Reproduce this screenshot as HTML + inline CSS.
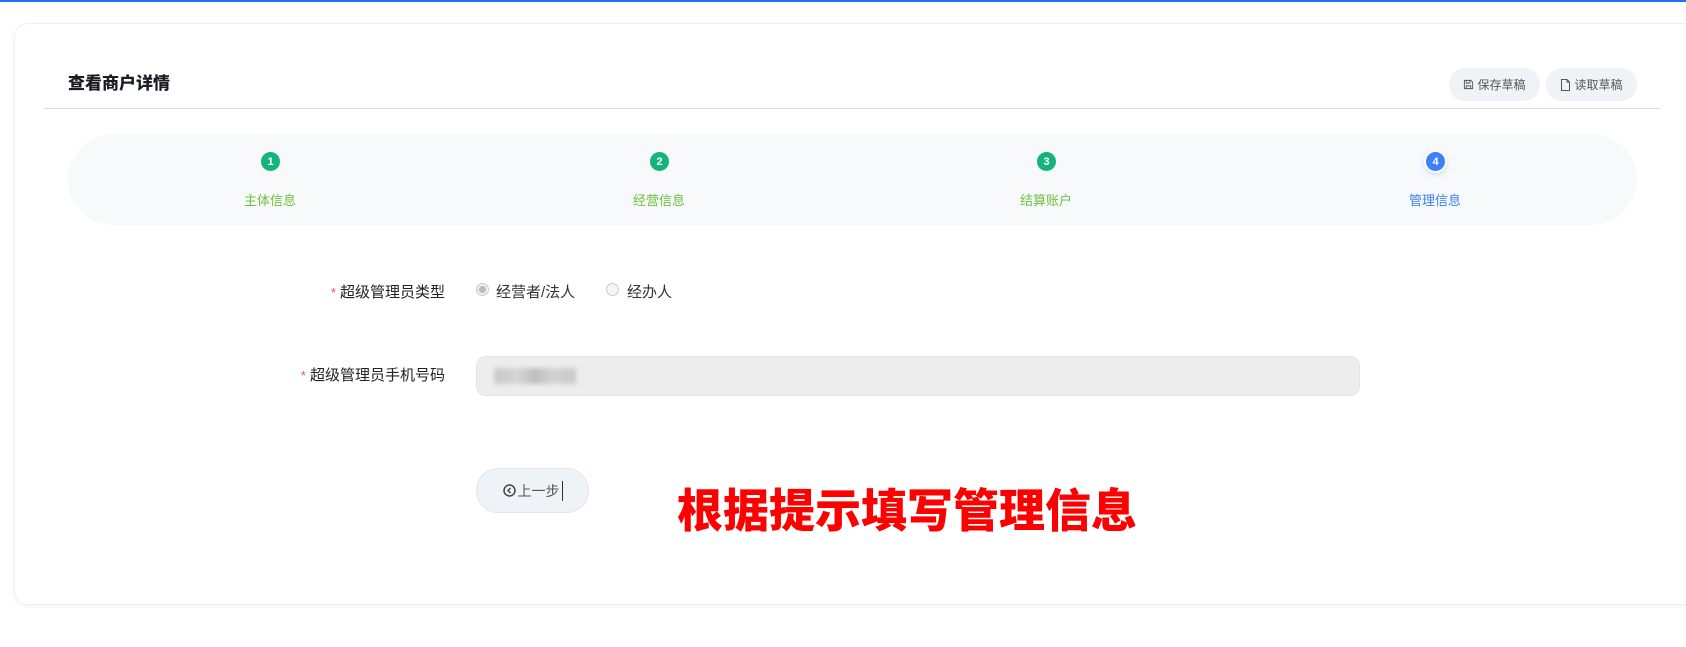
<!DOCTYPE html>
<html><head><meta charset="utf-8"><style>
*{margin:0;padding:0;box-sizing:border-box}
body{width:1686px;height:647px;background:#fff;position:relative;overflow:hidden;font-family:"Liberation Sans","Noto Sans CJK SC",sans-serif;color:#333}
.topline{position:absolute;left:0;top:0;width:1686px;height:2px;background:#1a73f0}
.card{position:absolute;left:14px;top:23px;width:1700px;height:582px;border:1px solid #eef0f4;border-radius:14px;background:#fff;box-shadow:0 2px 6px rgba(0,0,0,.04)}
.abs{position:absolute}
.title{left:68px;top:69px;font-size:17px;font-weight:900;color:#1a1d24;font-family:"Noto Sans CJK SC",sans-serif}
.div{left:44px;top:108px;width:1617px;height:1px;background:#dcdfe4}
.btn{top:68px;height:33px;border-radius:16px;background:#eff2f7;font-size:12px;color:#555;display:flex;align-items:center;justify-content:center;gap:3px}
.steps{left:68px;top:134px;width:1569px;height:91px;border-radius:46px;background:#f7f9fb}
.dot{width:19px;height:19px;border-radius:50%;background:#14b47a;color:#fff;font-size:11px;font-weight:bold;display:flex;align-items:center;justify-content:center;top:152px}
.lab{top:190px;font-size:13px;color:#6ec23e;width:120px;text-align:center}
.fl{font-size:15px;color:#222;text-align:right;width:300px}
.fl b{color:#f04f4f;font-weight:normal;font-size:13px;margin-right:4px}
.radio{width:13px;height:13px;border-radius:50%;border:1px solid #ccc;background:#f5f5f5}
</style></head><body>
<div class="topline"></div>
<div class="card"></div>
<div class="abs title">查看商户详情</div>
<div class="abs div"></div>
<div class="abs btn" style="left:1449px;width:91px"><svg width="11" height="11" viewBox="0 0 12 12"><path d="M1.5 1.5h7l2 2v7h-9z M3.5 1.5v3h4v-3 M3.5 10.5v-3h5v3" fill="none" stroke="#555" stroke-width="1"/></svg>保存草稿</div>
<div class="abs btn" style="left:1546px;width:91px"><svg width="11" height="12" viewBox="0 0 11 12"><path d="M1.5 .5h5.5l2.5 2.5v8.5h-8z M7 .5v2.5h2.5" fill="none" stroke="#555" stroke-width="1"/></svg>读取草稿</div>
<div class="abs steps"></div>
<div class="abs dot" style="left:261px">1</div>
<div class="abs dot" style="left:650px">2</div>
<div class="abs dot" style="left:1037px">3</div>
<div class="abs dot" style="left:1426px;background:#3b82f6;box-shadow:0 0 0 2px #fff,0 2px 6px rgba(59,130,246,.5)">4</div>
<div class="abs lab" style="left:210px">主体信息</div>
<div class="abs lab" style="left:599px">经营信息</div>
<div class="abs lab" style="left:986px">结算账户</div>
<div class="abs lab" style="left:1375px;color:#3b82f6">管理信息</div>
<div class="abs fl" style="left:145px;top:281px"><b>*</b>超级管理员类型</div>
<div class="abs radio" style="left:476px;top:283px;background:#eee"><div style="width:7px;height:7px;border-radius:50%;background:#bbb;margin:2px"></div></div>
<div class="abs" style="left:496px;top:281px;font-size:15px;color:#333">经营者/法人</div>
<div class="abs radio" style="left:606px;top:283px"></div>
<div class="abs" style="left:627px;top:281px;font-size:15px;color:#333">经办人</div>
<div class="abs fl" style="left:145px;top:364px"><b>*</b>超级管理员手机号码</div>
<div class="abs" style="left:476px;top:356px;width:884px;height:40px;border-radius:10px;background:#ededed;border:1px solid #e0e3e8"></div>
<div class="abs" style="left:494px;top:368px;width:82px;height:16px;background:linear-gradient(90deg,#bbb,#ccc 30%,#aaa 50%,#c8c8c8 70%,#bbb);filter:blur(2px);opacity:.7"></div>
<div class="abs" style="left:476px;top:468px;width:113px;height:45px;border-radius:22px;background:#eff3f8;border:1px solid #e1e6ee;display:flex;align-items:center;justify-content:center;font-size:14px;color:#555;gap:2px"><svg width="13" height="13" viewBox="0 0 13 13"><circle cx="6.5" cy="6.5" r="5.5" fill="none" stroke="#444" stroke-width="1.5"/><path d="M7.5 4l-2.5 2.5 2.5 2.5" fill="none" stroke="#444" stroke-width="1.5"/></svg>上一步<span style="display:inline-block;width:1px;height:20px;background:#333"></span></div>
<div class="abs" style="left:677px;top:483px;font-size:46px;line-height:50px;font-weight:900;color:#ff0000;font-family:'Noto Sans CJK SC',sans-serif">根据提示填写管理信息</div>
</body></html>
